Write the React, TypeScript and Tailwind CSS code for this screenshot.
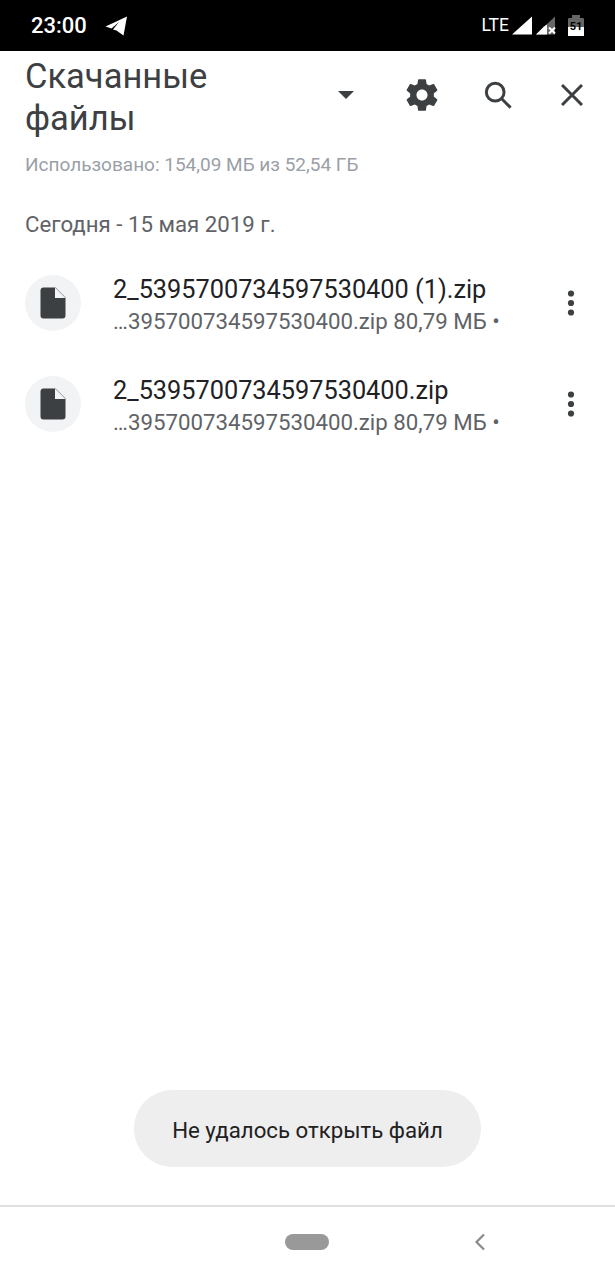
const Dots = () => (
  <svg width="10" height="28" viewBox="0 0 10 28" className="text-[#3c4043]" fill="currentColor">
    <circle cx="5" cy="4.5" r="3.1" />
    <circle cx="5" cy="14" r="3.1" />
    <circle cx="5" cy="23.5" r="3.1" />
  </svg>
);

const FileIcon = () => (
  <div className="w-14 h-14 rounded-full bg-[#f1f3f4] flex items-center justify-center shrink-0">
    <svg width="26" height="32" viewBox="0 0 26 32">
      <path d="M3 0.5H15.5L25.5 10.5V28.5a3 3 0 0 1-3 3H3.5a3 3 0 0 1-3-3V3a3 3 0 0 1 2.5-2.5z" fill="#3c4043" />
      <path d="M15 0.5L25.5 11H15z" fill="#f4f5f6" />
    </svg>
  </div>
);

const Row = ({ name }: { name: string }) => (
  <div className="flex items-center h-[101px] pl-[25px] pr-[39px]">
    <FileIcon />
    <div className="ml-8 flex-1 min-w-0 pt-[5px]">
      <div className="text-[25.3px] leading-[32px] text-[#202124] whitespace-nowrap">{name}</div>
      <div className="text-[22.25px] leading-[30px] text-[#5f6368] whitespace-nowrap">…395700734597530400.zip 80,79 МБ •</div>
    </div>
    <Dots />
  </div>
);

export default function App() {
  return (
    <div className="w-[615px] h-[1280px] bg-white flex flex-col overflow-hidden font-['Roboto',sans-serif]">
      <div className="h-[51px] bg-black flex items-center text-white pl-[31px] pr-[31px] shrink-0">
        <span className="text-[22px] font-medium leading-none">23:00</span>
        <svg width="23" height="20" viewBox="0 0 23 20" className="ml-[18px]" fill="white">
          <path d="M0.5 10.5L22 0.5L18.5 19.5L11.5 14.5L8 13.5L14 6L6.5 12.5z" />
        </svg>
        <span className="ml-auto text-[17.5px] leading-none">LTE</span>
        <svg width="20" height="19" viewBox="0 0 20 18" className="ml-[3px]" fill="white">
          <path d="M20 0V18H0z" />
        </svg>
        <svg width="20" height="19" viewBox="0 0 20 18" className="ml-[4px]">
          <path d="M19 0V18H0z" fill="#666" />
          <path d="M11 8V18H0L8 10z" fill="white" />
          <path d="M13 11l6 6M19 11l-6 6" stroke="white" strokeWidth="2" />
        </svg>
        <div className="ml-[12px] relative w-4 h-[21px] flex flex-col items-center">
          <div className="w-2 h-[3px] bg-[#666]" />
          <div className="w-4 flex-1 bg-[#666] flex flex-col justify-end rounded-[1px]">
            <div className="h-[9px] bg-white" />
          </div>
          <span className="absolute top-[6px] left-0 w-full text-center text-[11px] leading-none font-bold text-black">51</span>
        </div>
      </div>

      <div className="flex items-center pl-[25px] pr-[31px] pt-1 shrink-0">
        <div className="w-[205px] text-[34.5px] leading-[42px] text-[#3c4043]">Скачанные файлы</div>
        <div className="flex items-center h-[80px] flex-1 self-start">
          <svg width="16" height="8" viewBox="0 0 16 8" className="ml-[108px]" fill="#3c4043">
            <path d="M0 0H16L8 8z" />
          </svg>
          <svg width="38" height="38" viewBox="0 0 24 24" className="ml-[49px]" fill="#3c4043">
            <path d="M19.43 12.98c.04-.32.07-.64.07-.98s-.03-.66-.07-.98l2.11-1.65c.19-.15.24-.42.12-.64l-2-3.46c-.12-.22-.39-.3-.61-.22l-2.49 1c-.52-.4-1.08-.73-1.69-.98l-.38-2.65A.488.488 0 0 0 14 2h-4c-.25 0-.46.18-.49.42l-.38 2.65c-.61.25-1.17.59-1.69.98l-2.49-1c-.23-.09-.49 0-.61.22l-2 3.46c-.13.22-.07.49.12.64l2.11 1.65c-.04.32-.07.65-.07.98s.03.66.07.98l-2.11 1.65c-.19.15-.24.42-.12.64l2 3.46c.12.22.39.3.61.22l2.49-1c.52.4 1.08.73 1.69.98l.38 2.65c.03.24.24.42.49.42h4c.25 0 .46-.18.49-.42l.38-2.65c.61-.25 1.17-.59 1.69-.98l2.49 1c.23.09.49 0 .61-.22l2-3.46c.12-.22.07-.49-.12-.64l-2.11-1.65zM12 15.5c-1.93 0-3.5-1.57-3.5-3.5s1.57-3.5 3.5-3.5 3.5 1.57 3.5 3.5-1.57 3.5-3.5 3.5z" />
          </svg>
          <svg width="28" height="28" viewBox="0 0 30 30" className="ml-[43px]" fill="none" stroke="#3c4043" strokeWidth="3.2">
            <circle cx="12" cy="12" r="9.5" />
            <path d="M19 19L28.5 28.5" />
          </svg>
          <svg width="22" height="22" viewBox="0 0 22 22" className="ml-[49px]" fill="none" stroke="#3c4043" strokeWidth="3">
            <path d="M1 1L21 21M21 1L1 21" />
          </svg>
        </div>
      </div>

      <div className="pl-[25px] mt-[13px] text-[19px] leading-[26px] text-[#9aa0a6]">Использовано: 154,09 МБ из 52,54 ГБ</div>
      <div className="pl-[25px] mt-[32px] text-[22.25px] leading-[28px] text-[#5f6368]">Сегодня - 15 мая 2019 г.</div>

      <div className="mt-[14px]">
        <Row name="2_5395700734597530400 (1).zip" />
        <Row name="2_5395700734597530400.zip" />
      </div>

      <div className="flex-1" />

      <div className="self-center w-[347px] h-[77px] pt-1 rounded-[38px] bg-[#eeeeee] flex items-center justify-center text-[22.25px] text-[#212121] shrink-0">
        Не удалось открыть файл
      </div>

      <div className="mt-[38px] h-[75px] border-t-2 border-[#e0e0e0] flex items-center pb-[3px] shrink-0">
        <div className="ml-[285px] w-11 h-4 rounded-full bg-[#999999]" />
        <svg width="12" height="18" viewBox="0 0 12 18" className="ml-[145px]" fill="none" stroke="#8a8a8a" strokeWidth="2.2">
          <path d="M10 1.5L2.5 9L10 16.5" />
        </svg>
      </div>
    </div>
  );
}
